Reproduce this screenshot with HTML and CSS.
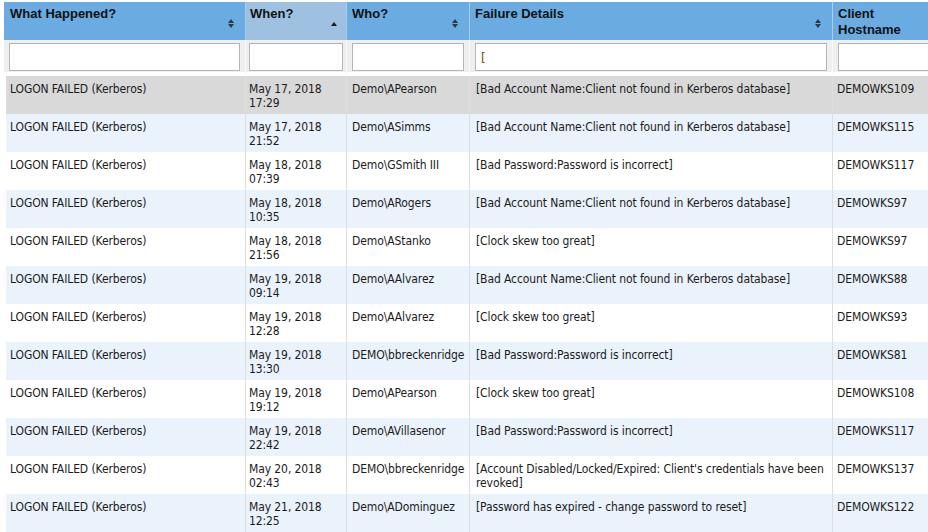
FILE: index.html
```html
<!DOCTYPE html>
<html>
<head>
<meta charset="utf-8">
<link rel="stylesheet" href="styles.css">
</head>
<body>
<div class="wrap">
<table class="grid">
  <colgroup>
    <col class="c1"><col class="c2"><col class="c3"><col class="c4"><col class="c5">
  </colgroup>
  <thead>
    <tr class="head">
      <th><div class="hcell"><span>What Happened?</span><i class="sort both"></i></div></th>
      <th class="sorted"><div class="hcell"><span>When?</span><i class="sort asc"></i></div></th>
      <th><div class="hcell"><span>Who?</span><i class="sort both"></i></div></th>
      <th><div class="hcell"><span>Failure Details</span><i class="sort both"></i></div></th>
      <th><div class="hcell"><span>Client Hostname</span></div></th>
    </tr>
    <tr class="filters">
      <th><input type="text"></th>
      <th><input type="text"></th>
      <th><input type="text"></th>
      <th><input type="text" value="["></th>
      <th><input type="text"></th>
    </tr>
  </thead>
  <tbody>
    <tr class="sel"><td>LOGON FAILED (Kerberos)</td><td>May 17, 2018<br>17:29</td><td>Demo\APearson</td><td>[Bad Account Name:Client not found in Kerberos database]</td><td>DEMOWKS109</td></tr>
    <tr class="alt"><td>LOGON FAILED (Kerberos)</td><td>May 17, 2018<br>21:52</td><td>Demo\ASimms</td><td>[Bad Account Name:Client not found in Kerberos database]</td><td>DEMOWKS115</td></tr>
    <tr><td>LOGON FAILED (Kerberos)</td><td>May 18, 2018<br>07:39</td><td>Demo\GSmith III</td><td>[Bad Password:Password is incorrect]</td><td>DEMOWKS117</td></tr>
    <tr class="alt"><td>LOGON FAILED (Kerberos)</td><td>May 18, 2018<br>10:35</td><td>Demo\ARogers</td><td>[Bad Account Name:Client not found in Kerberos database]</td><td>DEMOWKS97</td></tr>
    <tr><td>LOGON FAILED (Kerberos)</td><td>May 18, 2018<br>21:56</td><td>Demo\AStanko</td><td>[Clock skew too great]</td><td>DEMOWKS97</td></tr>
    <tr class="alt"><td>LOGON FAILED (Kerberos)</td><td>May 19, 2018<br>09:14</td><td>Demo\AAlvarez</td><td>[Bad Account Name:Client not found in Kerberos database]</td><td>DEMOWKS88</td></tr>
    <tr><td>LOGON FAILED (Kerberos)</td><td>May 19, 2018<br>12:28</td><td>Demo\AAlvarez</td><td>[Clock skew too great]</td><td>DEMOWKS93</td></tr>
    <tr class="alt"><td>LOGON FAILED (Kerberos)</td><td>May 19, 2018<br>13:30</td><td>DEMO\bbreckenridge</td><td>[Bad Password:Password is incorrect]</td><td>DEMOWKS81</td></tr>
    <tr><td>LOGON FAILED (Kerberos)</td><td>May 19, 2018<br>19:12</td><td>Demo\APearson</td><td>[Clock skew too great]</td><td>DEMOWKS108</td></tr>
    <tr class="alt"><td>LOGON FAILED (Kerberos)</td><td>May 19, 2018<br>22:42</td><td>Demo\AVillasenor</td><td>[Bad Password:Password is incorrect]</td><td>DEMOWKS117</td></tr>
    <tr><td>LOGON FAILED (Kerberos)</td><td>May 20, 2018<br>02:43</td><td>DEMO\bbreckenridge</td><td>[Account Disabled/Locked/Expired: Client's credentials have been revoked]</td><td>DEMOWKS137</td></tr>
    <tr class="alt"><td>LOGON FAILED (Kerberos)</td><td>May 21, 2018<br>12:25</td><td>Demo\ADominguez</td><td>[Password has expired - change password to reset]</td><td>DEMOWKS122</td></tr>
  </tbody>
</table>
</div>
</body>
</html>
```

FILE: styles.css
```css
html, body {
  margin: 0;
  padding: 0;
  background: #fff;
  overflow: hidden;
}
.wrap {
  padding: 2px 0 0 4px;
  width: 1000px;
}
.grid {
  border-collapse: separate;
  border-spacing: 0;
  table-layout: fixed;
  width: 938px;
  font-family: "DejaVu Sans Condensed", "DejaVu Sans", sans-serif;
  font-size: 12px;
  color: #1b1b1b;
}
.c1 { width: 241px; }
.c2 { width: 101px; }
.c3 { width: 123px; }
.c4 { width: 363px; }
.c5 { width: 110px; }

.head th {
  background: #6aace2;
  height: 38px;
  padding: 0;
  vertical-align: top;
  text-align: left;
  border-left: 1px solid #a9cdea;
  font-family: "Liberation Sans", Arial, sans-serif;
  font-weight: bold;
  font-size: 13px;
  color: #111;
}
.head th:first-child { border-left: 0; }
.head th.sorted { background: #9fc1e1; }
.hcell {
  position: relative;
  height: 38px;
  box-sizing: border-box;
  padding: 4px 22px 0 5px;
  line-height: 16px;
}
.head th:first-child .hcell { padding-left: 6px; }
.head th.sorted .hcell { padding-left: 4px; }
.sort {
  position: absolute;
  right: 10px;
  top: 17px;
  width: 7px;
  height: 10px;
}
.sort.both::before, .sort.both::after, .sort.asc::before {
  content: "";
  position: absolute;
  left: 0;
  border-left: 3.5px solid transparent;
  border-right: 3.5px solid transparent;
}
.sort.both::before {
  top: 0;
  border-bottom: 4px solid #2b3a48;
}
.sort.both::after {
  top: 5px;
  border-top: 4px solid #2b3a48;
}
.sort.asc::before {
  top: 3px;
  border-bottom: 4px solid #1c1c1c;
}
.sorted .sort { right: 8px; }

.filters th {
  background: #efefef;
  padding: 3px 5px 1px 5px;
  border-left: 1px solid #fafafa;
  border-bottom: 4px solid #fff;
  height: 28px;
}
.filters th:first-child { border-left: 0; }
.filters th:nth-child(2) { padding-left: 3px; padding-right: 3px; }
.filters input {
  display: block;
  box-sizing: border-box;
  width: 100%;
  height: 28px;
  margin: 0;
  border: 1px solid #b4b4b4;
  background: #fff;
  padding: 2px 5px;
  font-family: "DejaVu Sans Condensed", "DejaVu Sans", sans-serif;
  font-size: 13px;
  color: #7a4a00;
}

tbody td {
  height: 38px;
  box-sizing: border-box;
  padding: 6px 5px 0 5px;
  vertical-align: top;
  line-height: 14px;
  letter-spacing: -0.1px;
  border-left: 1px solid #dedede;
  background: #fff;
}
tbody td:first-child {
  border-left: 2px solid #fff;
  padding-left: 4px;
}
tbody td:nth-child(2) { padding-left: 3px; }
tbody td:nth-child(4) { padding-left: 6px; padding-right: 3px; }
tbody td:nth-child(5) { padding-left: 4px; }
tbody tr.alt td { background: #eaf2fb; }
tbody tr.sel td { background: #d9d9d9; }
```
